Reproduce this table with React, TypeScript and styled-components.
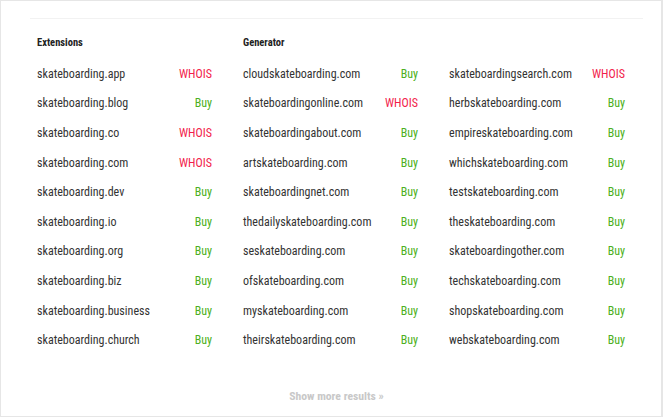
import React from "react";
import styled, { createGlobalStyle } from "styled-components";

const Global = createGlobalStyle`
  html, body { margin: 0; padding: 0; background: #fff; }
  body { font-family: "Roboto Condensed", "Liberation Sans Narrow", Roboto, Arial, sans-serif; }
`;

const Card = styled.div`
  box-sizing: border-box;
  width: 663px;
  height: 417px;
  border: 1px solid #e6e6e6;
  border-right-width: 2px;
  background: #fff;
  padding: 17px 18px 0 29px;
  display: flex;
  flex-direction: column;
`;

const Section = styled.div`
  border-top: 1px solid #f2f2f2;
  padding: 17px 20px 0 7px;
  display: grid;
  grid-template-columns: 175px 175px 176px;
  column-gap: 31px;
`;

const Column = styled.div`
  display: flex;
  flex-direction: column;
`;

const Heading = styled.div`
  font-size: 10.5px;
  font-weight: 700;
  color: #222;
  height: 14px;
  line-height: 14px;
  margin-bottom: 9px;
`;

const Row = styled.div`
  display: flex;
  justify-content: space-between;
  align-items: center;
  height: 29.6px;
  font-size: 12px;
  color: #333;
`;

const Action = styled.span<{ $kind: "buy" | "whois" }>`
  color: ${(p) => (p.$kind === "buy" ? "#4caf20" : "#f21e4c")};
`;

const More = styled.div`
  margin-top: auto;
  margin-bottom: 13px;
  text-align: center;
  font-size: 11.7px;
  font-weight: 700;
  color: #c8c8c8;
`;

type Item = [string, "buy" | "whois"];

const ext: Item[] = [
  ["skateboarding.app", "whois"],
  ["skateboarding.blog", "buy"],
  ["skateboarding.co", "whois"],
  ["skateboarding.com", "whois"],
  ["skateboarding.dev", "buy"],
  ["skateboarding.io", "buy"],
  ["skateboarding.org", "buy"],
  ["skateboarding.biz", "buy"],
  ["skateboarding.business", "buy"],
  ["skateboarding.church", "buy"],
];

const gen1: Item[] = [
  ["cloudskateboarding.com", "buy"],
  ["skateboardingonline.com", "whois"],
  ["skateboardingabout.com", "buy"],
  ["artskateboarding.com", "buy"],
  ["skateboardingnet.com", "buy"],
  ["thedailyskateboarding.com", "buy"],
  ["seskateboarding.com", "buy"],
  ["ofskateboarding.com", "buy"],
  ["myskateboarding.com", "buy"],
  ["theirskateboarding.com", "buy"],
];

const gen2: Item[] = [
  ["skateboardingsearch.com", "whois"],
  ["herbskateboarding.com", "buy"],
  ["empireskateboarding.com", "buy"],
  ["whichskateboarding.com", "buy"],
  ["testskateboarding.com", "buy"],
  ["theskateboarding.com", "buy"],
  ["skateboardingother.com", "buy"],
  ["techskateboarding.com", "buy"],
  ["shopskateboarding.com", "buy"],
  ["webskateboarding.com", "buy"],
];

const List = ({ title, items }: { title: string; items: Item[] }) => (
  <Column>
    <Heading>{title}</Heading>
    {items.map(([name, kind]) => (
      <Row key={name}>
        <span>{name}</span>
        <Action $kind={kind}>{kind === "buy" ? "Buy" : "WHOIS"}</Action>
      </Row>
    ))}
  </Column>
);

export default function App() {
  return (
    <>
      <Global />
      <Card>
        <Section>
          <List title="Extensions" items={ext} />
          <List title="Generator" items={gen1} />
          <List title={"\u00a0"} items={gen2} />
        </Section>
        <More>Show more results »</More>
      </Card>
    </>
  );
}
